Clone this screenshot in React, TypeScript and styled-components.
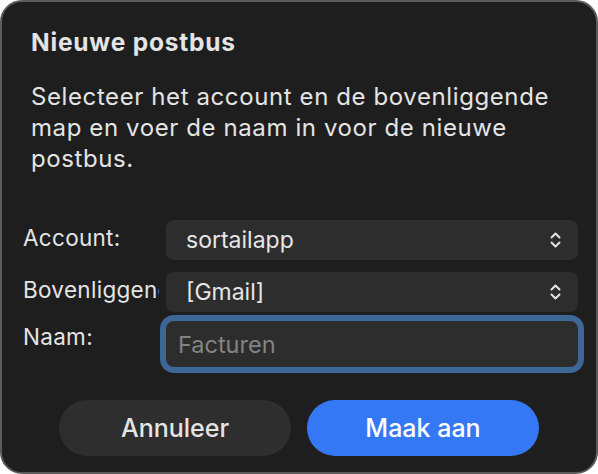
import styled, { createGlobalStyle } from "styled-components";

const GlobalStyle = createGlobalStyle`
  html, body {
    margin: 0;
    padding: 0;
    background: #ffffff;
  }
  body {
    font-family: Inter, "Liberation Sans", sans-serif;
    -webkit-font-smoothing: antialiased;
  }
`;

function Chevrons() {
  return (
    <svg width="13" height="18" viewBox="0 0 13 18" fill="none">
      <path d="M2.5 6.5L6.5 2.5L10.5 6.5" stroke="#e4e4e4" strokeWidth="2" strokeLinecap="round" strokeLinejoin="round" />
      <path d="M2.5 11.5L6.5 15.5L10.5 11.5" stroke="#e4e4e4" strokeWidth="2" strokeLinecap="round" strokeLinejoin="round" />
    </svg>
  );
}

export default function App() {
  return (
    <>
      <GlobalStyle />
      <Dialog>
        <Title>Nieuwe postbus</Title>
        <Message>
          Selecteer het account en de bovenliggende map en voer de naam in voor de nieuwe
          postbus.
        </Message>

        <Form>
          <Label>Account:</Label>
          <Select>
            <span>sortailapp</span>
            <Chevrons />
          </Select>

          <Label>Bovenliggende map:</Label>
          <Select>
            <span>[Gmail]</span>
            <Chevrons />
          </Select>

          <Label $tall>Naam:</Label>
          <TextField placeholder="Facturen" />
        </Form>

        <Buttons>
          <Button>Annuleer</Button>
          <Button $primary>Maak aan</Button>
        </Buttons>
      </Dialog>
    </>
  );
}

const Dialog = styled.div`
  box-sizing: border-box;
  width: 598px;
  height: 474px;
  background: #1e1e1e;
  border: 2px solid #5b5b5b;
  border-radius: 22px;
  padding: 25px 18px 0 21px;
  display: flex;
  flex-direction: column;
  color: #e6e6e6;
`;

const Title = styled.div`
  font-size: 24.5px;
  font-weight: 700;
  line-height: 30px;
  letter-spacing: 0.8px;
  padding-left: 8px;
  color: #e4e4e4;
`;

const Message = styled.div`
  margin-top: 24px;
  padding-left: 8px;
  max-width: 548px;
  font-size: 24px;
  line-height: 31px;
  letter-spacing: 0.6px;
  color: #e4e4e4;
`;

const Form = styled.div`
  margin-top: 46px;
  display: grid;
  grid-template-columns: 136px 1fr;
  column-gap: 7px;
  row-gap: 12px;
  align-items: center;
`;

const Label = styled.div<{ $tall?: boolean }>`
  font-size: 22.5px;
  letter-spacing: 0.3px;
  color: #e4e4e4;
  white-space: nowrap;
  overflow: hidden;
  text-overflow: clip;
  align-self: ${(p) => (p.$tall ? "start" : "center")};
  padding-top: ${(p) => (p.$tall ? "5px" : "0")};
  margin-top: -6px;
`;

const Select = styled.div`
  box-sizing: border-box;
  height: 40px;
  border-radius: 8px;
  background: #2d2d2d;
  display: flex;
  align-items: center;
  justify-content: space-between;
  padding: 0 16px 0 20px;
  font-size: 23px;
  color: #e6e6e6;
`;

const TextField = styled.input`
  box-sizing: border-box;
  height: 46px;
  margin-top: -3px;
  border-radius: 8px;
  background: #2d2d2d;
  border: none;
  outline: none;
  box-shadow: 0 0 0 6px #3c6796;
  padding: 0 12px;
  font-family: inherit;
  font-size: 23.5px;
  color: #e6e6e6;
  &::placeholder {
    color: #848484;
  }
`;

const Buttons = styled.div`
  margin-top: 33px;
  display: flex;
  justify-content: center;
  gap: 16px;
  padding-right: 3px;
`;

const Button = styled.button<{ $primary?: boolean }>`
  width: 232px;
  height: 56px;
  border: none;
  border-radius: 28px;
  background: ${(p) => (p.$primary ? "#3478f6" : "#2e2e2e")};
  color: ${(p) => (p.$primary ? "#ffffff" : "#e4e4e4")};
  font-family: inherit;
  font-size: 25px;
  font-weight: 500;
`;
